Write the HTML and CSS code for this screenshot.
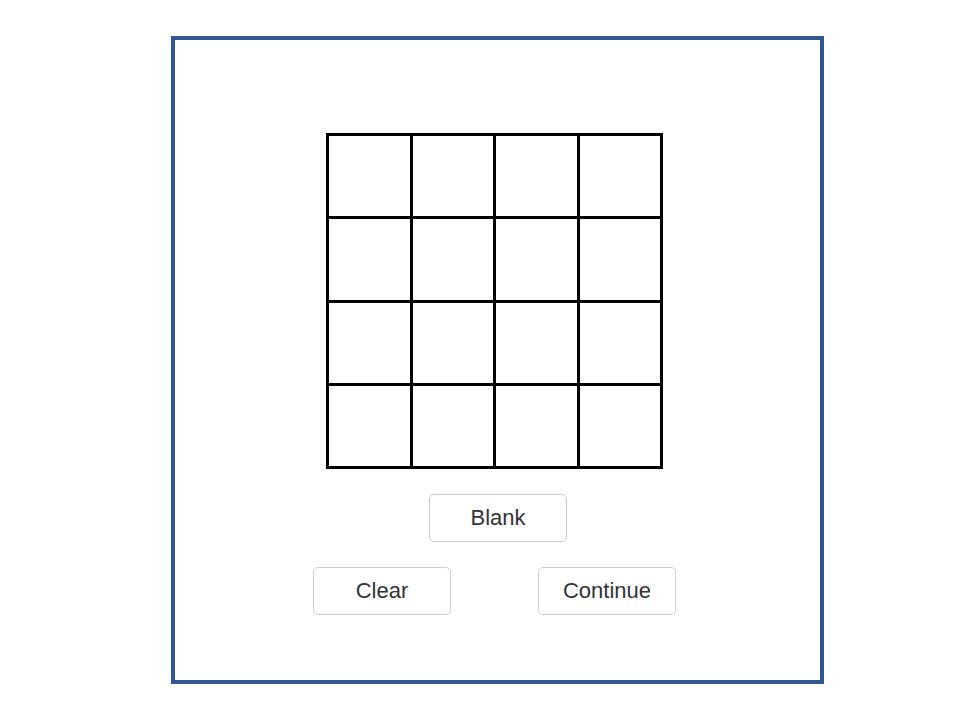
FILE: index.html
```html
<!DOCTYPE html>
<html>
<head>
<meta charset="utf-8">
<link rel="stylesheet" href="styles.css">
</head>
<body>
<div class="frame">
  <div class="board">
    <div class="cell"></div><div class="cell"></div><div class="cell"></div><div class="cell"></div>
    <div class="cell"></div><div class="cell"></div><div class="cell"></div><div class="cell"></div>
    <div class="cell"></div><div class="cell"></div><div class="cell"></div><div class="cell"></div>
    <div class="cell"></div><div class="cell"></div><div class="cell"></div><div class="cell"></div>
  </div>
  <div class="row row-blank">
    <button class="btn">Blank</button>
  </div>
  <div class="row row-actions">
    <button class="btn">Clear</button>
    <button class="btn">Continue</button>
  </div>
</div>
</body>
</html>
```

FILE: styles.css
```css
html, body {
  margin: 0;
  padding: 0;
  background: #ffffff;
}
body {
  font-family: "Liberation Sans", Arial, sans-serif;
}
.frame {
  box-sizing: border-box;
  margin: 36px 0 0 171px;
  width: 653px;
  height: 648px;
  border: 4px solid #2f5597;
  padding-top: 93px;
  display: flex;
  flex-direction: column;
  align-items: flex-start;
}
.board {
  margin-left: 151px;
  display: grid;
  grid-template-columns: repeat(4, 80.5px);
  grid-template-rows: repeat(4, 80.25px);
  gap: 3px;
  padding: 3px;
  background: #000000;
}
.cell {
  background: #ffffff;
}
.row {
  display: flex;
}
.row-blank {
  margin-top: 25px;
  margin-left: 254px;
}
.row-actions {
  margin-top: 25px;
  margin-left: 138px;
  gap: 87px;
}
.btn {
  box-sizing: border-box;
  width: 138px;
  height: 48px;
  background: #ffffff;
  border: 1px solid #d0d0d0;
  border-radius: 5px;
  font-family: "Liberation Sans", Arial, sans-serif;
  font-size: 22px;
  color: #333333;
  padding: 0;
}
```
